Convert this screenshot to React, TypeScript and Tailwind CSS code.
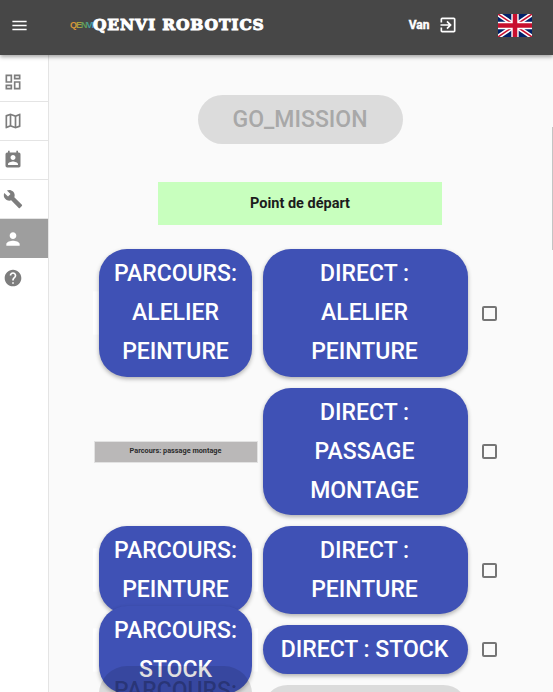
import React from "react";
import { MdMenu, MdExitToApp, MdOutlineDashboard, MdOutlineMap, MdPermContactCalendar, MdBuild, MdPerson, MdHelp } from "react-icons/md";

const Flag = () => (
  <svg width="34" height="23" viewBox="0 0 60 40" preserveAspectRatio="none">
    <rect width="60" height="40" fill="#012169" />
    <path d="M0 0L60 40M60 0L0 40" stroke="#fff" strokeWidth="8" />
    <path d="M0 0L60 40M60 0L0 40" stroke="#c8102e" strokeWidth="2.6" />
    <path d="M30 0V40M0 20H60" stroke="#fff" strokeWidth="13" />
    <path d="M30 0V40M0 20H60" stroke="#c8102e" strokeWidth="8" />
  </svg>
);

const Btn = ({ lines, className = "", disabled = false }: { lines: string[]; className?: string; disabled?: boolean }) => (
  <div
    className={
      "relative flex shrink-0 flex-col items-center rounded-[28px] pt-[5px] text-center text-[23px] font-medium leading-[39px] " +
      (disabled
        ? "bg-[rgba(0,0,0,0.12)] text-[rgba(0,0,0,0.26)] "
        : "bg-[#3f51b5] text-white shadow-[0_2px_4px_rgba(0,0,0,0.3)] ") +
      className
    }
  >
    {lines.map((l) => (
      <span key={l} className="whitespace-nowrap">{l}</span>
    ))}
  </div>
);

const Check = () => (
  <div className="ml-[14px] h-[15px] w-[15px] shrink-0 rounded-[2px] border-2 border-[#757575]" />
);

const Cell = ({ children, plate = true }: { children: React.ReactNode; plate?: boolean }) => (
  <div className="relative flex w-[165px] shrink-0 justify-center">
    {plate && <div className="absolute inset-x-0 top-1/2 h-[43px] -translate-y-1/2 bg-white" />}
    {children}
  </div>
);

const nav = [
  { I: MdOutlineDashboard },
  { I: MdOutlineMap },
  { I: MdPermContactCalendar },
  { I: MdBuild },
  { I: MdPerson, active: true },
  { I: MdHelp, last: true },
];

export default function App() {
  return (
    <div className="relative flex h-[692px] w-[553px] flex-col overflow-hidden bg-[#fafafa] font-['Roboto',sans-serif]">
      <header className="z-10 flex h-[55px] shrink-0 items-center bg-[#474747] pb-[5px] shadow-[0_2px_4px_rgba(0,0,0,0.35)]">
        <MdMenu className="ml-[10px] text-white" size={19} />
        <div className="ml-[41px] flex items-center">
          <span className="flex w-[23px] font-['Liberation_Sans',sans-serif] text-[9px] font-bold leading-none tracking-[-1px]">
            <span className="text-[#d9933a]">Q</span>
            <span className="text-[#a9a13c]">E</span>
            <span className="text-[#5f9e58]">N</span>
            <span className="text-[#3f9f9a]">V</span>
            <span className="text-[#4a8fc0]">I</span>
          </span>
          <span className="whitespace-nowrap font-['DejaVu_Serif',serif] text-[15.5px] font-bold tracking-[0.85px] text-white [-webkit-text-stroke:1px_white]">
            QENVI ROBOTICS
          </span>
        </div>
        <span className="ml-[144px] text-[12px] font-bold text-white [-webkit-text-stroke:0.4px_white]">Van</span>
        <MdExitToApp className="ml-[9px] text-white" size={20} />
        <div className="ml-[40px] mt-[1px] flex"><Flag /></div>
      </header>
      <div className="flex min-h-0 flex-1">
        <aside className="flex w-[49px] shrink-0 flex-col border-r border-[#e4e4e4] bg-white pt-[8px]">
          {nav.map(({ I, active, last }, i) => (
            <div
              key={i}
              className={
                "flex h-[39px] items-center justify-center pr-[23px] " +
                (active ? "bg-[#9e9e9e] text-white" : "text-[#7d7d7d]") +
                (!active && !last ? " border-b border-[#e4e4e4]" : "")
              }
            >
              <I size={20} />
            </div>
          ))}
        </aside>
        <main className="min-w-0 flex-1">
          <div className="flex justify-center pr-[2px] pt-[40px]">
            <div className="flex h-[49px] w-[205px] items-center justify-center rounded-[25px] bg-[#dcdcdc] pt-[1px] text-[23px] font-medium text-[#a8a8a8]">
              GO_MISSION
            </div>
          </div>
          <div className="ml-[109px] mt-[38px] flex h-[43px] w-[284px] items-center justify-center bg-[#c8ffbe] text-[14.5px] font-bold text-[#1c1c1c]">
            Point de départ
          </div>
          <div className="ml-[44px] mt-[24px] flex flex-col gap-[11px]">
            <div className="flex items-center">
              <Cell><Btn lines={["PARCOURS:", "ALELIER", "PEINTURE"]} className="h-[128px] w-[153px]" /></Cell>
              <Btn lines={["DIRECT :", "ALELIER", "PEINTURE"]} className="ml-[5px] h-[128px] w-[205px] pr-[2px]" />
              <Check />
            </div>
            <div className="flex items-center">
              <Cell plate={false}>
                <div className="flex h-[22px] w-[164px] items-center justify-center border border-[#e2e2e2] bg-[#bab8b8] text-[7.3px] font-bold text-[#2b2b2b]">
                  Parcours: passage montage
                </div>
              </Cell>
              <Btn lines={["DIRECT :", "PASSAGE", "MONTAGE"]} className="ml-[5px] h-[127px] w-[205px] pr-[2px]" />
              <Check />
            </div>
            <div className="flex items-center">
              <Cell><Btn lines={["PARCOURS:", "PEINTURE"]} className="h-[88px] w-[153px]" /></Cell>
              <Btn lines={["DIRECT :", "PEINTURE"]} className="ml-[5px] h-[88px] w-[205px] pr-[2px]" />
              <Check />
            </div>
            <div className="flex h-[49px] items-center">
              <Cell><Btn lines={["PARCOURS:", "STOCK"]} className="h-[88px] w-[153px]" /></Cell>
              <Btn lines={["DIRECT : STOCK"]} className="ml-[5px] h-[49px] w-[205px] pr-[2px]" />
              <Check />
            </div>
            <div className="flex h-[49px] items-center">
              <Cell plate={false}>
                <Btn disabled lines={["PARCOURS:"]} className="h-[88px] w-[153px]" />
              </Cell>
              <div className="ml-[5px] h-[49px] w-[205px] shrink-0 rounded-[25px] bg-[rgba(0,0,0,0.12)]" />
            </div>
          </div>
        </main>
      </div>
      <div className="absolute right-0 top-[127px] h-[123px] w-px bg-[#c4c4c4]" />
    </div>
  );
}
